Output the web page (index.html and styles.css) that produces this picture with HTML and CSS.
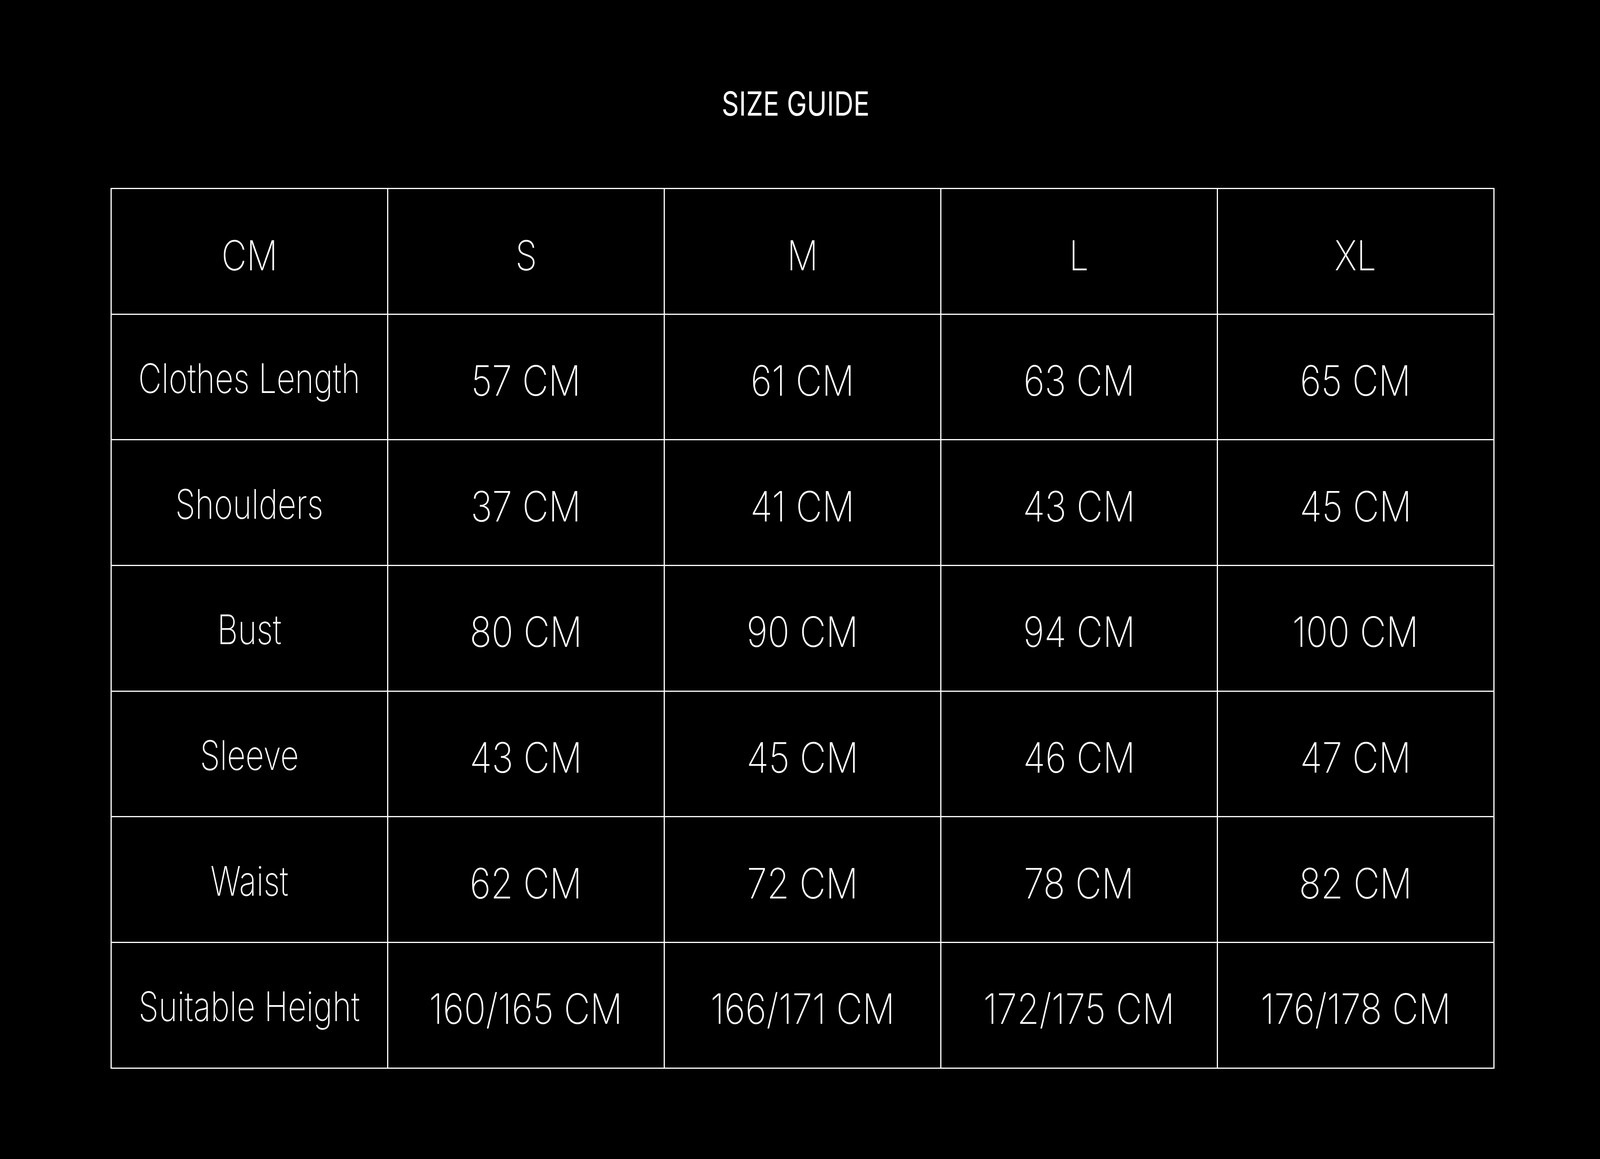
FILE: index.html
```html
<!DOCTYPE html>
<html lang="en">
<head>
<meta charset="utf-8">
<title>Size Guide</title>
<link rel="stylesheet" href="styles.css">
<script src="script.js"></script>
</head>
<body>
<main class="page">
  <h1 class="title"><span class="wide">SIZE GUIDE</span></h1>
  <div class="grid">
    <div class="cell head"><span class="wide">CM</span></div>
    <div class="cell head"><span class="wide">S</span></div>
    <div class="cell head"><span class="wide">M</span></div>
    <div class="cell head"><span class="wide">L</span></div>
    <div class="cell head"><span class="wide">XL</span></div>

    <div class="cell label"><span class="wide">Clothes Length</span></div>
    <div class="cell val"><span class="wide">57 CM</span></div>
    <div class="cell val"><span class="wide">61 CM</span></div>
    <div class="cell val"><span class="wide">63 CM</span></div>
    <div class="cell val"><span class="wide">65 CM</span></div>

    <div class="cell label"><span class="wide">Shoulders</span></div>
    <div class="cell val"><span class="wide">37 CM</span></div>
    <div class="cell val"><span class="wide">41 CM</span></div>
    <div class="cell val"><span class="wide">43 CM</span></div>
    <div class="cell val"><span class="wide">45 CM</span></div>

    <div class="cell label"><span class="wide">Bust</span></div>
    <div class="cell val"><span class="wide">80 CM</span></div>
    <div class="cell val"><span class="wide">90 CM</span></div>
    <div class="cell val"><span class="wide">94 CM</span></div>
    <div class="cell val"><span class="wide">100 CM</span></div>

    <div class="cell label"><span class="wide">Sleeve</span></div>
    <div class="cell val"><span class="wide">43 CM</span></div>
    <div class="cell val"><span class="wide">45 CM</span></div>
    <div class="cell val"><span class="wide">46 CM</span></div>
    <div class="cell val"><span class="wide">47 CM</span></div>

    <div class="cell label"><span class="wide">Waist</span></div>
    <div class="cell val"><span class="wide">62 CM</span></div>
    <div class="cell val"><span class="wide">72 CM</span></div>
    <div class="cell val"><span class="wide">78 CM</span></div>
    <div class="cell val"><span class="wide">82 CM</span></div>

    <div class="cell label"><span class="wide">Suitable Height</span></div>
    <div class="cell val"><span class="wide">160/165 CM</span></div>
    <div class="cell val"><span class="wide">166/171 CM</span></div>
    <div class="cell val"><span class="wide">172/175 CM</span></div>
    <div class="cell val"><span class="wide">176/178 CM</span></div>
  </div>
</main>
</body>
</html>
```

FILE: script.js
```js
(function () {
  function fit() {
    var sx = window.innerWidth / 6959;
    document.documentElement.style.setProperty('--sx', sx.toFixed(4));
  }
  fit();
  window.addEventListener('resize', fit);
})();
```

FILE: styles.css
```css
:root {
  --sx: 1;
}

html, body {
  margin: 0;
  padding: 0;
  background: #000;
  overflow: hidden;
}

body {
  color: #fff;
  font-family: Inter, Lato, "Liberation Sans", Arial, sans-serif;
  font-weight: 200;
}

.page {
  padding: 223px 0 0 6.912vw;
  width: 86.49vw;
}

.title {
  margin: 0 0 172px 0;
  padding-right: 0.86vw;
  font-size: 85px;
  line-height: 86px;
  font-weight: 400;
  text-align: center;
  white-space: nowrap;
}

.grid {
  display: grid;
  grid-template-columns: repeat(5, minmax(0, 1fr));
  border-top: 3px solid #fff;
  border-left: 3px solid #fff;
}

.cell {
  box-sizing: border-box;
  height: 321.7px;
  border-right: 3px solid #fff;
  border-bottom: 3px solid #fff;
  display: flex;
  align-items: center;
  justify-content: center;
  padding-top: 6px;
  font-size: 104px;
  line-height: 1;
  white-space: nowrap;
}

.cell.head {
  font-size: 106px;
  padding-top: 22px;
}

.cell.val {
  font-size: 107px;
  padding-top: 19px;
  font-variant-numeric: proportional-nums;
}

.wide {
  display: inline-block;
  transform: scaleX(calc(1.34 * var(--sx)));
  transform-origin: center;
}

.cell.head .wide {
  transform: scaleX(calc(1.42 * var(--sx)));
}

.cell.val .wide {
  transform: scaleX(calc(1.47 * var(--sx)));
}

.title .wide {
  transform: scaleX(calc(1.375 * var(--sx)));
}
```
